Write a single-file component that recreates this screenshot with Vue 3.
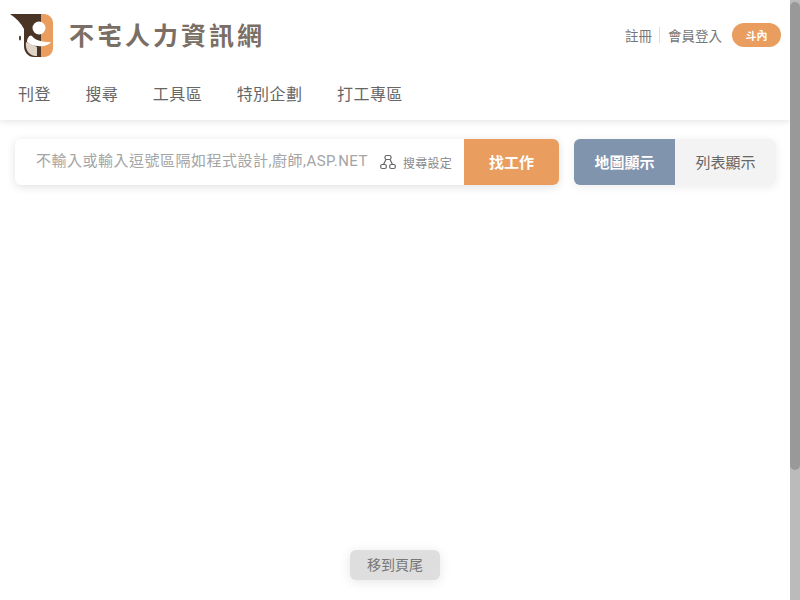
<template>
  <div class="page">
    <header class="site-header">
      <div class="top-row">
        <a class="logo">
          <svg class="logo-mark" width="44" height="44" viewBox="0 0 44 44">
            <path d="M0 0H31V43H24C18 43 14 38 14 32V15C11 9 6 4 0 0Z" fill="#4a3426" />
            <path d="M31 0H34C39 0 43 4 43 9V34C43 39 39 43 34 43H31Z" fill="#e99d5e" />
            <path d="M16 28C20 30 24 31 27 33V42H25C19 41 15 36 16 28Z" fill="#dfd5c6" />
            <circle cx="29" cy="14" r="6.5" fill="#fff" />
            <path d="M17 28C17 24 20 20 22 22C25 26 31 28 41 28C39 31 33 33 28 32C23 32 20 30 17 28Z" fill="#fff" />
            <ellipse cx="10" cy="24" rx="1" ry="2.5" fill="#4a3426" />
          </svg>
          <span class="logo-text">不宅人力資訊網</span>
        </a>
        <div class="user-links">
          <a>註冊</a>
          <span class="divider"></span>
          <a>會員登入</a>
          <button class="tag-btn">斗內</button>
        </div>
      </div>
      <nav class="main-nav">
        <a v-for="item in navItems" :key="item">{{ item }}</a>
      </nav>
    </header>

    <section class="search-row">
      <div class="search-box">
        <input class="keyword" type="text" placeholder="不輸入或輸入逗號區隔如程式設計,廚師,ASP.NET" />
        <a class="search-setting">
          <svg width="16" height="16" viewBox="0 0 16 16" fill="none" stroke="#666" stroke-width="1.2">
            <rect x="5" y="1.5" width="6" height="4" rx="1.5" />
            <rect x="0.7" y="10.5" width="5.6" height="4" rx="1.5" />
            <rect x="9.7" y="10.5" width="5.6" height="4" rx="1.5" />
            <path d="M6 5.5L3.5 10.5M10 5.5L12.5 10.5" />
          </svg>
          <span>搜尋設定</span>
        </a>
        <button class="find-btn">找工作</button>
      </div>
      <div class="view-switch">
        <button class="active">地圖顯示</button>
        <button>列表顯示</button>
      </div>
    </section>

    <button class="to-bottom">移到頁尾</button>
    <div class="scroll-track"><div class="scroll-thumb"></div></div>
  </div>
</template>

<script setup>
const navItems = ['刊登', '搜尋', '工具區', '特別企劃', '打工專區']
</script>

<style>
html, body {
  overflow: hidden;
}
</style>

<style scoped>
.page {
  position: relative;
  width: 800px;
  height: 600px;
  overflow: hidden;
  background: #fff;
  font-family: "Liberation Sans", "Noto Sans CJK TC", sans-serif;
}

.site-header {
  width: 790px;
  height: 120px;
  background: #fff;
  box-shadow: 0 1px 8px rgba(0, 0, 0, 0.12);
}

.top-row {
  display: flex;
  align-items: center;
  justify-content: space-between;
  height: 70px;
  padding: 0 9px 0 10px;
}

.logo {
  display: flex;
  align-items: center;
  gap: 15px;
}

.logo-mark {
  display: block;
  margin-top: 1px;
}

.logo-text {
  padding-bottom: 2px;
  color: #7a6e65;
  font-size: 25px;
  font-weight: 700;
  letter-spacing: 3px;
}

.user-links {
  display: flex;
  align-items: center;
  color: #777;
  font-size: 13.5px;
}

.divider {
  width: 1px;
  height: 16px;
  margin: 0 8px 0 7px;
  background: #ddd;
}

.tag-btn {
  width: 49px;
  height: 24px;
  margin-left: 10px;
  padding: 0;
  border: none;
  border-radius: 12px;
  background: #e99d5e;
  color: #fff;
  font-family: inherit;
  font-size: 11px;
  font-weight: 700;
}

.main-nav {
  display: flex;
  gap: 34.5px;
  padding: 0 18px;
  color: #666;
  font-size: 16px;
  letter-spacing: 0.45px;
  line-height: 50px;
}

.search-row {
  display: flex;
  gap: 15px;
  width: 790px;
  box-sizing: border-box;
  padding: 19px 14px 0 15px;
}

.search-box {
  display: flex;
  align-items: center;
  width: 544px;
  height: 46px;
  border-radius: 6px;
  background: #fff;
  box-shadow: 0 2px 10px rgba(0, 0, 0, 0.12);
}

.keyword {
  width: 344px;
  margin-left: 21px;
  padding: 0 0 2px;
  border: none;
  outline: none;
  font-family: Roboto, "Noto Sans CJK TC", sans-serif;
  font-size: 15px;
}

.keyword::placeholder {
  color: #a4a4a4;
  letter-spacing: 0.5px;
}

.search-setting {
  display: flex;
  align-items: center;
  gap: 7px;
  color: #888;
  font-size: 12px;
  letter-spacing: 0.25px;
  white-space: nowrap;
}

.find-btn {
  width: 95px;
  height: 46px;
  margin-left: auto;
  padding: 0 0 2px;
  border: none;
  border-radius: 0 6px 6px 0;
  background: #e99d5e;
  color: #fff;
  font-family: inherit;
  font-size: 15px;
  font-weight: 700;
}

.view-switch {
  display: flex;
  height: 46px;
  border-radius: 6px;
  box-shadow: 0 2px 10px rgba(0, 0, 0, 0.08);
}

.view-switch button {
  width: 101px;
  padding: 0 0 2px;
  border: none;
  background: #f3f3f3;
  color: #666;
  font-family: inherit;
  font-size: 15px;
}

.view-switch button:last-child {
  border-radius: 0 6px 6px 0;
}

.view-switch .active {
  border-radius: 6px 0 0 6px;
  background: #8094ae;
  color: #fff;
  font-weight: 700;
}

.to-bottom {
  position: absolute;
  left: 350px;
  top: 550px;
  width: 90px;
  height: 30px;
  padding: 0 0 2px;
  border: none;
  border-radius: 6px;
  background: #dedede;
  color: #777;
  font-family: inherit;
  font-size: 14px;
  box-shadow: 0 2px 12px rgba(0, 0, 0, 0.1);
}

.scroll-track {
  position: absolute;
  top: 0;
  right: 0;
  bottom: 0;
  width: 10px;
  background: #bbb;
}

.scroll-thumb {
  width: 100%;
  height: 468px;
  margin-top: 2px;
  border-radius: 5px;
  background: #999;
}
</style>
